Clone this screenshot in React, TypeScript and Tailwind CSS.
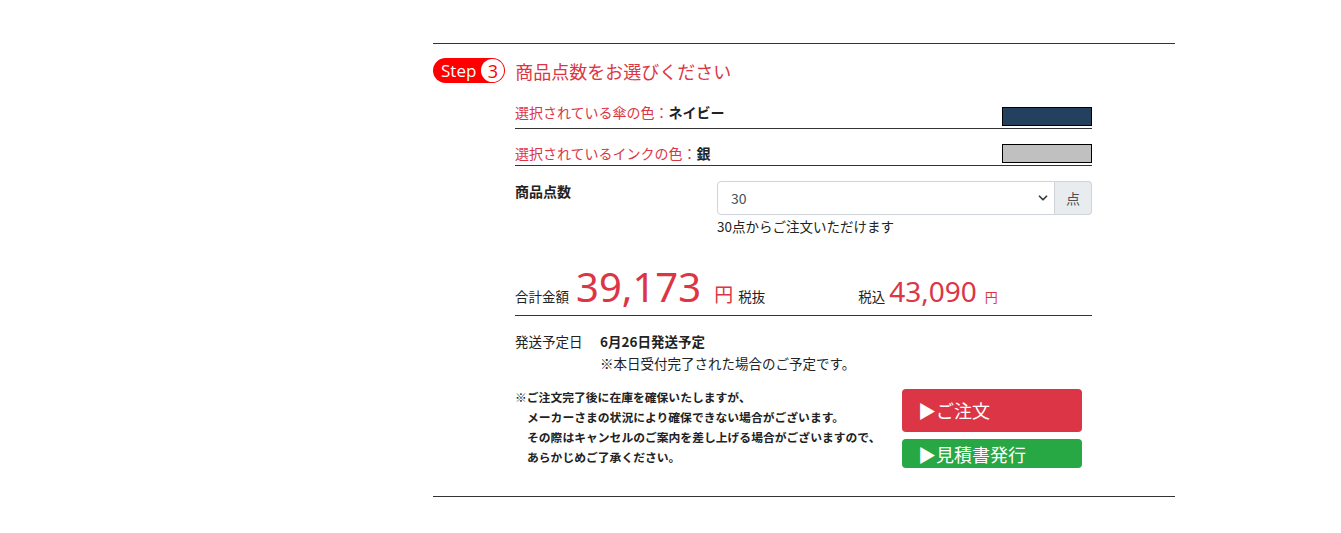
import { ChevronDown } from "lucide-react";

const font = { fontFamily: '"Noto Sans CJK JP", "Noto Sans", sans-serif' };

function StepBadge() {
    return (
        <div className="flex items-center h-[25px] rounded-full bg-[#ff0000] pl-[8px] pr-[1px]">
            <span className="text-white text-[17px] leading-none mr-[5px]" style={{ fontFamily: '"Open Sans", "Noto Sans", sans-serif' }}>Step</span>
            <span className="w-[23px] h-[23px] rounded-full bg-white flex items-center justify-center text-[#ff0000] text-[18px] leading-none" style={{ fontFamily: '"Open Sans", sans-serif' }}>3</span>
        </div>
    );
}

function ColorRow({ label, value, color, textPad }: { label: string; value: string; color: string; textPad: string }) {
    return (
        <div className="flex items-end justify-between border-b border-[#333] pb-[2px]">
            <p className={`text-[14px] leading-[20px] ${textPad}`}>
                <span className="text-[#dc3545]">{label}</span>
                <span className="font-bold text-[#222]">{value}</span>
            </p>
            <div className="w-[90px] h-[19px] border border-black" style={{ backgroundColor: color }} />
        </div>
    );
}

export default function App() {
    return (
        <div className="bg-white w-[1341px] h-[533px] text-[#222]" style={font}>
            <div className="pl-[433px] pt-[43px]">
                <div className="w-[742px] border-t border-[#333] pt-[14px]">
                    <div className="flex items-center gap-[10px]">
                        <StepBadge />
                        <h2 className="text-[18px] text-[#dc3545] leading-none">商品点数をお選びください</h2>
                    </div>

                    <div className="ml-[82px] w-[577px]">
                        <div className="mt-[19px]">
                            <ColorRow label="選択されている傘の色：" value="ネイビー" color="#23405f" textPad="pb-[4px]" />
                        </div>
                        <div className="mt-[14px]">
                            <ColorRow label="選択されているインクの色：" value="銀" color="#c0c0c0" textPad="pb-0" />
                        </div>

                        <div className="flex mt-[15px]">
                            <div className="w-[202px] text-[14px] font-bold">商品点数</div>
                            <div className="flex-1">
                                <div className="flex h-[34px]">
                                    <div className="flex-1 flex items-center justify-between border border-[#ced4da] rounded-l-[4px] pl-[13px] pr-[4px] text-[14px] text-[#495057]">
                                        <span>30</span>
                                        <ChevronDown size={14} strokeWidth={3} className="text-[#343a40]" />
                                    </div>
                                    <div className="w-[37px] flex items-center justify-center bg-[#e9ecef] border border-l-0 border-[#ced4da] rounded-r-[4px] text-[14px] text-[#495057]">点</div>
                                </div>
                                <p className="text-[13.5px] mt-[1px] leading-[20px]">30点からご注文いただけます</p>
                            </div>
                        </div>

                        <div className="flex items-baseline mt-[29px] border-b border-[#333] pb-[3px]">
                            <span className="text-[13.5px]">合計金額</span>
                            <span className="text-[40px] leading-[44px] text-[#dc3545] ml-[7px]" style={{ fontFamily: '"Noto Sans", sans-serif' }}>39,173</span>
                            <span className="text-[19px] text-[#dc3545] ml-[13px]">円</span>
                            <span className="text-[13.5px] ml-[5px]">税抜</span>
                            <span className="text-[13.5px] ml-[93px]">税込</span>
                            <span className="text-[28px] text-[#dc3545] ml-[4px]" style={{ fontFamily: '"Noto Sans", sans-serif' }}>43,090</span>
                            <span className="text-[13px] text-[#dc3545] ml-[8px]">円</span>
                        </div>

                        <div className="mt-[14px] text-[13.5px] leading-[22px]">
                            <div className="flex">
                                <span className="w-[85px]">発送予定日</span>
                                <span className="font-bold">6月26日発送予定</span>
                            </div>
                            <p className="pl-[85px]">※本日受付完了された場合のご予定です。</p>
                        </div>

                        <div className="flex justify-between mt-[8px] pr-[10px]">
                            <div className="text-[11.8px] font-bold leading-[20px] pt-[5px]">
                                <p>※ご注文完了後に在庫を確保いたしますが、</p>
                                <p className="pl-[12px]">メーカーさまの状況により確保できない場合がございます。</p>
                                <p className="pl-[12px]">その際はキャンセルのご案内を差し上げる場合がございますので、</p>
                                <p className="pl-[12px]">あらかじめご了承ください。</p>
                            </div>
                            <div className="w-[180px] flex flex-col gap-[7px] mt-[7px]">
                                <button className="h-[43px] rounded-[4px] bg-[#dc3545] text-white text-[18px] text-left pl-[16px]">▶ご注文</button>
                                <button className="h-[29px] rounded-[4px] bg-[#28a745] text-white text-[18px] text-left pl-[16px] leading-none">▶見積書発行</button>
                            </div>
                        </div>
                    </div>

                    <div className="border-b border-[#333] mt-[28px]" />
                </div>
            </div>
        </div>
    );
}
